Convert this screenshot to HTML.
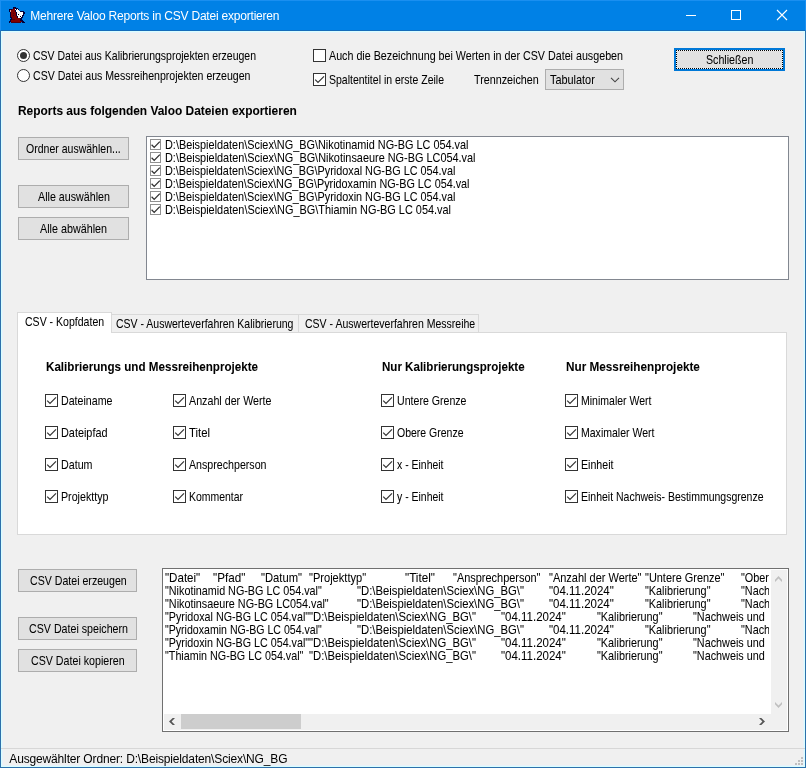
<!DOCTYPE html>
<html lang="de">
<head>
<meta charset="utf-8">
<title>Mehrere Valoo Reports in CSV Datei exportieren</title>
<style>
html,body{margin:0;padding:0;}
body{width:806px;height:768px;overflow:hidden;position:relative;background:#f0f0f0;font-family:"Liberation Sans",sans-serif;}
.a{position:absolute;box-sizing:border-box;}
.t{position:absolute;white-space:pre;transform-origin:0 0;-webkit-text-stroke:0.05px currentColor;}
.u{-webkit-text-stroke:0;}
.btn{position:absolute;box-sizing:border-box;background:#e1e1e1;border:1px solid #adadad;}
.cb{position:absolute;box-sizing:border-box;width:13px;height:13px;background:#fff;border:1px solid #333;}
.cb svg,.lc svg{position:absolute;left:-1px;top:-1px;}
.lc{position:absolute;box-sizing:border-box;width:11px;height:11px;background:#fff;border:1px solid #909090;}
.rd{position:absolute;box-sizing:border-box;width:13px;height:13px;background:#fff;border:1px solid #333;border-radius:50%;}
</style>
</head>
<body>
<!-- forces grayscale text AA in chromium -->
<div class="a" style="left:0;top:0;width:1px;height:1px;mix-blend-mode:multiply;background:#fff;"></div>
<!-- title bar -->
<div class="a" style="left:0;top:0;width:806px;height:31px;background:#0081e6;border-top:1px solid #1a8ff0;border-left:1px solid #1a8ff0;border-right:1px solid #1a8ff0;border-bottom:1px solid #156cba;"></div>
<!-- window borders + edge halo -->
<div class="a" style="left:1px;top:31px;width:804px;height:736px;border:1px solid #d9feff;"></div>
<div class="a" style="left:2px;top:32px;width:802px;height:734px;border:1px solid #e7f2fb;"></div>
<div class="a" style="left:0;top:31px;width:1px;height:737px;background:#2d70ab;"></div>
<div class="a" style="left:805px;top:31px;width:1px;height:737px;background:#2d70ab;"></div>
<div class="a" style="left:0;top:767px;width:806px;height:1px;background:#2d70ab;"></div>
<!-- app icon -->
<svg class="a" style="left:9px;top:7px;" width="16" height="16" viewBox="0 0 16 16" shape-rendering="crispEdges">
<rect x="4" y="0" width="3" height="1" fill="#00003c"/><rect x="4" y="1" width="1" height="1" fill="#00003c"/><rect x="5" y="1" width="1" height="1" fill="#800000"/><rect x="6" y="1" width="3" height="1" fill="#00003c"/><rect x="0" y="2" width="3" height="1" fill="#00003c"/><rect x="3" y="2" width="3" height="1" fill="#800000"/><rect x="6" y="2" width="1" height="1" fill="#ffffff"/><rect x="7" y="2" width="1" height="1" fill="#00003c"/><rect x="8" y="2" width="1" height="1" fill="#ffffff"/><rect x="9" y="2" width="1" height="1" fill="#00003c"/><rect x="0" y="3" width="1" height="1" fill="#00003c"/><rect x="1" y="3" width="1" height="1" fill="#d8a8a8"/><rect x="2" y="3" width="4" height="1" fill="#800000"/><rect x="6" y="3" width="1" height="1" fill="#00003c"/><rect x="7" y="3" width="3" height="1" fill="#ffffff"/><rect x="0" y="4" width="1" height="1" fill="#00003c"/><rect x="1" y="4" width="1" height="1" fill="#d8a8a8"/><rect x="2" y="4" width="4" height="1" fill="#800000"/><rect x="6" y="4" width="1" height="1" fill="#00003c"/><rect x="7" y="4" width="4" height="1" fill="#ffffff"/><rect x="11" y="4" width="4" height="1" fill="#00003c"/><rect x="1" y="5" width="1" height="1" fill="#00003c"/><rect x="2" y="5" width="5" height="1" fill="#800000"/><rect x="7" y="5" width="1" height="1" fill="#00003c"/><rect x="8" y="5" width="6" height="1" fill="#ffffff"/><rect x="14" y="5" width="2" height="1" fill="#00003c"/><rect x="1" y="6" width="1" height="1" fill="#00003c"/><rect x="2" y="6" width="2" height="1" fill="#800000"/><rect x="4" y="6" width="1" height="1" fill="#500010"/><rect x="5" y="6" width="2" height="1" fill="#800000"/><rect x="7" y="6" width="1" height="1" fill="#00003c"/><rect x="8" y="6" width="6" height="1" fill="#ffffff"/><rect x="14" y="6" width="2" height="1" fill="#00003c"/><rect x="1" y="7" width="1" height="1" fill="#00003c"/><rect x="2" y="7" width="5" height="1" fill="#800000"/><rect x="7" y="7" width="1" height="1" fill="#00003c"/><rect x="8" y="7" width="1" height="1" fill="#ffffff"/><rect x="9" y="7" width="1" height="1" fill="#000000"/><rect x="10" y="7" width="4" height="1" fill="#ffffff"/><rect x="14" y="7" width="1" height="1" fill="#00003c"/><rect x="1" y="8" width="1" height="1" fill="#00003c"/><rect x="2" y="8" width="2" height="1" fill="#800000"/><rect x="4" y="8" width="1" height="1" fill="#500010"/><rect x="5" y="8" width="2" height="1" fill="#800000"/><rect x="7" y="8" width="1" height="1" fill="#00003c"/><rect x="8" y="8" width="5" height="1" fill="#ffffff"/><rect x="13" y="8" width="2" height="1" fill="#00003c"/><rect x="1" y="9" width="1" height="1" fill="#00003c"/><rect x="2" y="9" width="6" height="1" fill="#800000"/><rect x="8" y="9" width="1" height="1" fill="#00003c"/><rect x="9" y="9" width="2" height="1" fill="#ffffff"/><rect x="11" y="9" width="1" height="1" fill="#000000"/><rect x="12" y="9" width="1" height="1" fill="#ffffff"/><rect x="13" y="9" width="1" height="1" fill="#00003c"/><rect x="1" y="10" width="2" height="1" fill="#00003c"/><rect x="3" y="10" width="5" height="1" fill="#800000"/><rect x="8" y="10" width="1" height="1" fill="#00003c"/><rect x="9" y="10" width="3" height="1" fill="#ffffff"/><rect x="12" y="10" width="2" height="1" fill="#00003c"/><rect x="2" y="11" width="1" height="1" fill="#00003c"/><rect x="3" y="11" width="8" height="1" fill="#800000"/><rect x="11" y="11" width="2" height="1" fill="#00003c"/><rect x="1" y="12" width="2" height="1" fill="#00003c"/><rect x="3" y="12" width="3" height="1" fill="#500010"/><rect x="6" y="12" width="5" height="1" fill="#800000"/><rect x="11" y="12" width="2" height="1" fill="#00003c"/><rect x="1" y="13" width="1" height="1" fill="#00003c"/><rect x="2" y="13" width="9" height="1" fill="#800000"/><rect x="11" y="13" width="3" height="1" fill="#00003c"/><rect x="0" y="14" width="2" height="1" fill="#00003c"/><rect x="2" y="14" width="10" height="1" fill="#800000"/><rect x="12" y="14" width="1" height="1" fill="#500010"/><rect x="13" y="14" width="2" height="1" fill="#00003c"/><rect x="0" y="15" width="1" height="1" fill="#00003c"/><rect x="2" y="15" width="10" height="1" fill="#500010"/><rect x="13" y="15" width="3" height="1" fill="#00003c"/>
</svg>
<!-- window controls -->
<svg class="a" style="left:680px;top:0;" width="126" height="31" viewBox="0 0 126 31">
<path d="M6 15.5H16" stroke="#fff" stroke-width="1" fill="none"/>
<rect x="51.5" y="10.5" width="9" height="9" stroke="#fff" stroke-width="1" fill="none"/>
<path d="M97 10L107 20M107 10L97 20" stroke="#fff" stroke-width="1.1" fill="none"/>
</svg>

<!-- radios -->
<div class="rd" style="left:17px;top:49px;"><div class="a" style="left:2px;top:2px;width:7px;height:7px;border-radius:50%;background:#333;"></div></div>
<div class="rd" style="left:17px;top:69px;"></div>
<!-- top checkboxes -->
<div class="cb" style="left:313px;top:49px;"></div>
<div class="cb" style="left:313px;top:73px;"><svg width="13" height="13"><path d="M2.2 6.6L5 9.4L11 3.4" stroke="#333" stroke-width="1.2" fill="none"/></svg></div>
<!-- dropdown -->
<div class="a" style="left:545px;top:69px;width:79px;height:21px;background:#e1e1e1;border:1px solid #adadad;">
<svg class="a" style="left:64px;top:7px;" width="10" height="6"><path d="M1 0.8L5 4.8L9 0.8" stroke="#444" stroke-width="1.1" fill="none"/></svg>
</div>
<!-- close button (focused) -->
<div class="btn" style="left:674px;top:48px;width:111px;height:23px;border:2px solid #0078d7;">
<div class="a" style="left:0;top:0;right:0;bottom:0;border:1px solid #f4f4f4;"></div>
<div class="a" style="left:0;top:0;right:0;bottom:0;border:1px dotted #000;"></div>
</div>

<!-- left buttons -->
<div class="btn" style="left:18px;top:137px;width:111px;height:23px;"></div>
<div class="btn" style="left:18px;top:185px;width:111px;height:23px;"></div>
<div class="btn" style="left:18px;top:217px;width:111px;height:23px;"></div>

<!-- list box -->
<div class="a" style="left:146px;top:136px;width:643px;height:144px;background:#fff;border:1px solid #828790;"></div>
<div class="lc" style="left:150px;top:139px;"><svg width="11" height="11"><path d="M1.6 5.8L4.2 8.4L9.8 2.6" stroke="#303030" stroke-width="1.3" fill="none"/></svg></div>
<div class="lc" style="left:150px;top:152px;"><svg width="11" height="11"><path d="M1.6 5.8L4.2 8.4L9.8 2.6" stroke="#303030" stroke-width="1.3" fill="none"/></svg></div>
<div class="lc" style="left:150px;top:165px;"><svg width="11" height="11"><path d="M1.6 5.8L4.2 8.4L9.8 2.6" stroke="#303030" stroke-width="1.3" fill="none"/></svg></div>
<div class="lc" style="left:150px;top:178px;"><svg width="11" height="11"><path d="M1.6 5.8L4.2 8.4L9.8 2.6" stroke="#303030" stroke-width="1.3" fill="none"/></svg></div>
<div class="lc" style="left:150px;top:191px;"><svg width="11" height="11"><path d="M1.6 5.8L4.2 8.4L9.8 2.6" stroke="#303030" stroke-width="1.3" fill="none"/></svg></div>
<div class="lc" style="left:150px;top:204px;"><svg width="11" height="11"><path d="M1.6 5.8L4.2 8.4L9.8 2.6" stroke="#303030" stroke-width="1.3" fill="none"/></svg></div>


<!-- tab control -->
<div class="a" style="left:17px;top:332px;width:770px;height:203px;background:#fff;border:1px solid #d9d9d9;"></div>
<div class="a" style="left:111px;top:314px;width:188px;height:19px;background:#f0f0f0;border:1px solid #d9d9d9;border-left:none;"></div>
<div class="a" style="left:298px;top:314px;width:181px;height:19px;background:#f0f0f0;border:1px solid #d9d9d9;"></div>
<div class="a" style="left:17px;top:312px;width:95px;height:21px;background:#fff;border:1px solid #d9d9d9;border-bottom:none;"></div>
<div class="cb" style="left:45px;top:394px;"><svg width="13" height="13"><path d="M2.2 6.6L5 9.4L11 3.4" stroke="#333" stroke-width="1.2" fill="none"/></svg></div>
<div class="cb" style="left:45px;top:426px;"><svg width="13" height="13"><path d="M2.2 6.6L5 9.4L11 3.4" stroke="#333" stroke-width="1.2" fill="none"/></svg></div>
<div class="cb" style="left:45px;top:458px;"><svg width="13" height="13"><path d="M2.2 6.6L5 9.4L11 3.4" stroke="#333" stroke-width="1.2" fill="none"/></svg></div>
<div class="cb" style="left:45px;top:490px;"><svg width="13" height="13"><path d="M2.2 6.6L5 9.4L11 3.4" stroke="#333" stroke-width="1.2" fill="none"/></svg></div>
<div class="cb" style="left:173px;top:394px;"><svg width="13" height="13"><path d="M2.2 6.6L5 9.4L11 3.4" stroke="#333" stroke-width="1.2" fill="none"/></svg></div>
<div class="cb" style="left:173px;top:426px;"><svg width="13" height="13"><path d="M2.2 6.6L5 9.4L11 3.4" stroke="#333" stroke-width="1.2" fill="none"/></svg></div>
<div class="cb" style="left:173px;top:458px;"><svg width="13" height="13"><path d="M2.2 6.6L5 9.4L11 3.4" stroke="#333" stroke-width="1.2" fill="none"/></svg></div>
<div class="cb" style="left:173px;top:490px;"><svg width="13" height="13"><path d="M2.2 6.6L5 9.4L11 3.4" stroke="#333" stroke-width="1.2" fill="none"/></svg></div>
<div class="cb" style="left:381px;top:394px;"><svg width="13" height="13"><path d="M2.2 6.6L5 9.4L11 3.4" stroke="#333" stroke-width="1.2" fill="none"/></svg></div>
<div class="cb" style="left:381px;top:426px;"><svg width="13" height="13"><path d="M2.2 6.6L5 9.4L11 3.4" stroke="#333" stroke-width="1.2" fill="none"/></svg></div>
<div class="cb" style="left:381px;top:458px;"><svg width="13" height="13"><path d="M2.2 6.6L5 9.4L11 3.4" stroke="#333" stroke-width="1.2" fill="none"/></svg></div>
<div class="cb" style="left:381px;top:490px;"><svg width="13" height="13"><path d="M2.2 6.6L5 9.4L11 3.4" stroke="#333" stroke-width="1.2" fill="none"/></svg></div>
<div class="cb" style="left:565px;top:394px;"><svg width="13" height="13"><path d="M2.2 6.6L5 9.4L11 3.4" stroke="#333" stroke-width="1.2" fill="none"/></svg></div>
<div class="cb" style="left:565px;top:426px;"><svg width="13" height="13"><path d="M2.2 6.6L5 9.4L11 3.4" stroke="#333" stroke-width="1.2" fill="none"/></svg></div>
<div class="cb" style="left:565px;top:458px;"><svg width="13" height="13"><path d="M2.2 6.6L5 9.4L11 3.4" stroke="#333" stroke-width="1.2" fill="none"/></svg></div>
<div class="cb" style="left:565px;top:490px;"><svg width="13" height="13"><path d="M2.2 6.6L5 9.4L11 3.4" stroke="#333" stroke-width="1.2" fill="none"/></svg></div>


<!-- bottom buttons -->
<div class="btn" style="left:18px;top:569px;width:119px;height:23px;"></div>
<div class="btn" style="left:18px;top:617px;width:119px;height:23px;"></div>
<div class="btn" style="left:18px;top:649px;width:119px;height:23px;"></div>

<!-- text box -->
<div class="a" style="left:162px;top:568px;width:627px;height:164px;background:#fff;border:1px solid #707070;"></div>
<div class="a" style="left:0;top:0;width:769px;height:714px;overflow:hidden;">
<div class=t style="left:165.30px;top:570px;font-size:13px;line-height:15px;height:15px;color:#000;transform:scaleX(0.8894);">&quot;Datei&quot;</div>
<div class=t style="left:213.30px;top:570px;font-size:13px;line-height:15px;height:15px;color:#000;transform:scaleX(0.8976);">&quot;Pfad&quot;</div>
<div class=t style="left:261.30px;top:570px;font-size:13px;line-height:15px;height:15px;color:#000;transform:scaleX(0.8626);">&quot;Datum&quot;</div>
<div class=t style="left:309.30px;top:570px;font-size:13px;line-height:15px;height:15px;color:#000;transform:scaleX(0.8518);">&quot;Projekttyp&quot;</div>
<div class=t style="left:405.30px;top:570px;font-size:13px;line-height:15px;height:15px;color:#000;transform:scaleX(0.9006);">&quot;Titel&quot;</div>
<div class=t style="left:453.30px;top:570px;font-size:13px;line-height:15px;height:15px;color:#000;transform:scaleX(0.8421);">&quot;Ansprechperson&quot;</div>
<div class=t style="left:549.30px;top:570px;font-size:13px;line-height:15px;height:15px;color:#000;transform:scaleX(0.8452);">&quot;Anzahl der Werte&quot;</div>
<div class=t style="left:645.30px;top:570px;font-size:13px;line-height:15px;height:15px;color:#000;transform:scaleX(0.8413);">&quot;Untere Grenze&quot;</div>
<div class=t style="left:741.30px;top:570px;font-size:13px;line-height:15px;height:15px;color:#000;transform:scaleX(0.8351);">&quot;Obere Grenze&quot;</div>
<div class=t style="left:165.30px;top:583px;font-size:13px;line-height:15px;height:15px;color:#000;transform:scaleX(0.8290);">&quot;Nikotinamid NG-BG LC 054.val&quot;</div>
<div class=t style="left:357.30px;top:583px;font-size:13px;line-height:15px;height:15px;color:#000;transform:scaleX(0.8696);">&quot;D:\Beispieldaten\Sciex\NG_BG\&quot;</div>
<div class=t style="left:549.30px;top:583px;font-size:13px;line-height:15px;height:15px;color:#000;transform:scaleX(0.8837);">&quot;04.11.2024&quot;</div>
<div class=t style="left:645.30px;top:583px;font-size:13px;line-height:15px;height:15px;color:#000;transform:scaleX(0.8332);">&quot;Kalibrierung&quot;</div>
<div class=t style="left:741.30px;top:583px;font-size:13px;line-height:15px;height:15px;color:#000;transform:scaleX(0.8322);">&quot;Nachweis und</div>
<div class=t style="left:165.30px;top:596px;font-size:13px;line-height:15px;height:15px;color:#000;transform:scaleX(0.8306);">&quot;Nikotinsaeure NG-BG LC054.val&quot;</div>
<div class=t style="left:357.30px;top:596px;font-size:13px;line-height:15px;height:15px;color:#000;transform:scaleX(0.8696);">&quot;D:\Beispieldaten\Sciex\NG_BG\&quot;</div>
<div class=t style="left:549.30px;top:596px;font-size:13px;line-height:15px;height:15px;color:#000;transform:scaleX(0.8837);">&quot;04.11.2024&quot;</div>
<div class=t style="left:645.30px;top:596px;font-size:13px;line-height:15px;height:15px;color:#000;transform:scaleX(0.8332);">&quot;Kalibrierung&quot;</div>
<div class=t style="left:741.30px;top:596px;font-size:13px;line-height:15px;height:15px;color:#000;transform:scaleX(0.8322);">&quot;Nachweis und</div>
<div class=t style="left:165.30px;top:609px;font-size:13px;line-height:15px;height:15px;color:#000;transform:scaleX(0.8249);">&quot;Pyridoxal NG-BG LC 054.val&quot;</div>
<div class=t style="left:309.30px;top:609px;font-size:13px;line-height:15px;height:15px;color:#000;transform:scaleX(0.8696);">&quot;D:\Beispieldaten\Sciex\NG_BG\&quot;</div>
<div class=t style="left:501.30px;top:609px;font-size:13px;line-height:15px;height:15px;color:#000;transform:scaleX(0.8837);">&quot;04.11.2024&quot;</div>
<div class=t style="left:597.30px;top:609px;font-size:13px;line-height:15px;height:15px;color:#000;transform:scaleX(0.8332);">&quot;Kalibrierung&quot;</div>
<div class=t style="left:693.30px;top:609px;font-size:13px;line-height:15px;height:15px;color:#000;transform:scaleX(0.8322);">&quot;Nachweis und</div>
<div class=t style="left:165.30px;top:622px;font-size:13px;line-height:15px;height:15px;color:#000;transform:scaleX(0.8135);">&quot;Pyridoxamin NG-BG LC 054.val&quot;</div>
<div class=t style="left:357.30px;top:622px;font-size:13px;line-height:15px;height:15px;color:#000;transform:scaleX(0.8696);">&quot;D:\Beispieldaten\Sciex\NG_BG\&quot;</div>
<div class=t style="left:549.30px;top:622px;font-size:13px;line-height:15px;height:15px;color:#000;transform:scaleX(0.8837);">&quot;04.11.2024&quot;</div>
<div class=t style="left:645.30px;top:622px;font-size:13px;line-height:15px;height:15px;color:#000;transform:scaleX(0.8332);">&quot;Kalibrierung&quot;</div>
<div class=t style="left:741.30px;top:622px;font-size:13px;line-height:15px;height:15px;color:#000;transform:scaleX(0.8322);">&quot;Nachweis und</div>
<div class=t style="left:165.30px;top:635px;font-size:13px;line-height:15px;height:15px;color:#000;transform:scaleX(0.8249);">&quot;Pyridoxin NG-BG LC 054.val&quot;</div>
<div class=t style="left:309.30px;top:635px;font-size:13px;line-height:15px;height:15px;color:#000;transform:scaleX(0.8696);">&quot;D:\Beispieldaten\Sciex\NG_BG\&quot;</div>
<div class=t style="left:501.30px;top:635px;font-size:13px;line-height:15px;height:15px;color:#000;transform:scaleX(0.8837);">&quot;04.11.2024&quot;</div>
<div class=t style="left:597.30px;top:635px;font-size:13px;line-height:15px;height:15px;color:#000;transform:scaleX(0.8332);">&quot;Kalibrierung&quot;</div>
<div class=t style="left:693.30px;top:635px;font-size:13px;line-height:15px;height:15px;color:#000;transform:scaleX(0.8322);">&quot;Nachweis und</div>
<div class=t style="left:165.30px;top:648px;font-size:13px;line-height:15px;height:15px;color:#000;transform:scaleX(0.8265);">&quot;Thiamin NG-BG LC 054.val&quot;</div>
<div class=t style="left:309.30px;top:648px;font-size:13px;line-height:15px;height:15px;color:#000;transform:scaleX(0.8696);">&quot;D:\Beispieldaten\Sciex\NG_BG\&quot;</div>
<div class=t style="left:501.30px;top:648px;font-size:13px;line-height:15px;height:15px;color:#000;transform:scaleX(0.8837);">&quot;04.11.2024&quot;</div>
<div class=t style="left:597.30px;top:648px;font-size:13px;line-height:15px;height:15px;color:#000;transform:scaleX(0.8332);">&quot;Kalibrierung&quot;</div>
<div class=t style="left:693.30px;top:648px;font-size:13px;line-height:15px;height:15px;color:#000;transform:scaleX(0.8322);">&quot;Nachweis und</div>
</div>
<!-- scrollbars -->
<div class="a" style="left:771px;top:570px;width:16px;height:160px;background:#f0f0f0;"></div>
<div class="a" style="left:164px;top:714px;width:607px;height:16px;background:#f0f0f0;"></div>
<div class="a" style="left:181px;top:714px;width:120px;height:15px;background:#cdcdcd;"></div>
<svg class="a" style="left:0;top:0;" width="806" height="768" viewBox="0 0 806 768">
<polygon points="775,582 775,579.7 778.5,576 782,579.7 782,582 778.5,578.4" fill="#bfbfbf"/>
<polygon points="775,702 775,704.3 778.5,708 782,704.3 782,702 778.5,705.6" fill="#bfbfbf"/>
<polygon points="175,718 172.7,718 169,721.5 172.7,725 175,725 171.6,721.5" fill="#555"/>
<polygon points="759,718 761.3,718 765,721.5 761.3,725 759,725 762.4,721.5" fill="#555"/>
</svg>

<!-- status bar -->
<div class="a" style="left:1px;top:748px;width:804px;height:1px;background:#d7d7d7;"></div>
<svg class="a" style="left:794px;top:756px;" width="10" height="10" shape-rendering="crispEdges">
<g fill="#bfbfbf"><rect x="7" y="1" width="2" height="2"/><rect x="4" y="4" width="2" height="2"/><rect x="7" y="4" width="2" height="2"/><rect x="1" y="7" width="2" height="2"/><rect x="4" y="7" width="2" height="2"/><rect x="7" y="7" width="2" height="2"/></g>
</svg>

<div class="t u" style="left:30.30px;top:9px;font-size:12px;line-height:15px;height:15px;color:#fff;letter-spacing:-0.208px;">Mehrere Valoo Reports in CSV Datei exportieren</div>
<div class="t" style="left:33.30px;top:48px;font-size:13px;line-height:15px;height:15px;color:#000;transform:scaleX(0.8078);">CSV Datei aus Kalibrierungsprojekten erzeugen</div>
<div class="t" style="left:33.30px;top:68px;font-size:13px;line-height:15px;height:15px;color:#000;transform:scaleX(0.8135);">CSV Datei aus Messreihenprojekten erzeugen</div>
<div class="t" style="left:328.80px;top:48px;font-size:13px;line-height:15px;height:15px;color:#000;transform:scaleX(0.8241);">Auch die Bezeichnung bei Werten in der CSV Datei ausgeben</div>
<div class="t" style="left:329.30px;top:72px;font-size:13px;line-height:15px;height:15px;color:#000;transform:scaleX(0.8078);">Spaltentitel in erste Zeile</div>
<div class="t" style="left:473.80px;top:72px;font-size:13px;line-height:15px;height:15px;color:#000;transform:scaleX(0.8276);">Trennzeichen</div>
<div class="t" style="left:549.80px;top:72px;font-size:13px;line-height:15px;height:15px;color:#000;transform:scaleX(0.8376);">Tabulator</div>
<div class="t" style="left:706.30px;top:52px;font-size:13px;line-height:15px;height:15px;color:#000;transform:scaleX(0.8199);">Schließen</div>
<div class="t" style="left:17.80px;top:103px;font-size:13px;line-height:15px;height:15px;color:#000;font-weight:bold;transform:scaleX(0.9167);">Reports aus folgenden Valoo Dateien exportieren</div>
<div class="t" style="left:26.30px;top:141px;font-size:13px;line-height:15px;height:15px;color:#000;transform:scaleX(0.8097);">Ordner auswählen...</div>
<div class="t" style="left:37.80px;top:189px;font-size:13px;line-height:15px;height:15px;color:#000;transform:scaleX(0.8222);">Alle auswählen</div>
<div class="t" style="left:39.50px;top:221px;font-size:13px;line-height:15px;height:15px;color:#000;transform:scaleX(0.8276);">Alle abwählen</div>
<div class="t" style="left:165.30px;top:137px;font-size:13px;line-height:15px;height:15px;color:#000;transform:scaleX(0.8367);">D:\Beispieldaten\Sciex\NG_BG\Nikotinamid NG-BG LC 054.val</div>
<div class="t" style="left:165.30px;top:150px;font-size:13px;line-height:15px;height:15px;color:#000;transform:scaleX(0.8377);">D:\Beispieldaten\Sciex\NG_BG\Nikotinsaeure NG-BG LC054.val</div>
<div class="t" style="left:165.30px;top:163px;font-size:13px;line-height:15px;height:15px;color:#000;transform:scaleX(0.8341);">D:\Beispieldaten\Sciex\NG_BG\Pyridoxal NG-BG LC 054.val</div>
<div class="t" style="left:165.30px;top:176px;font-size:13px;line-height:15px;height:15px;color:#000;transform:scaleX(0.8312);">D:\Beispieldaten\Sciex\NG_BG\Pyridoxamin NG-BG LC 054.val</div>
<div class="t" style="left:165.30px;top:189px;font-size:13px;line-height:15px;height:15px;color:#000;transform:scaleX(0.8341);">D:\Beispieldaten\Sciex\NG_BG\Pyridoxin NG-BG LC 054.val</div>
<div class="t" style="left:165.30px;top:202px;font-size:13px;line-height:15px;height:15px;color:#000;transform:scaleX(0.8386);">D:\Beispieldaten\Sciex\NG_BG\Thiamin NG-BG LC 054.val</div>
<div class="t" style="left:25.40px;top:314px;font-size:13px;line-height:15px;height:15px;color:#000;transform:scaleX(0.8108);">CSV - Kopfdaten</div>
<div class="t" style="left:116.40px;top:316px;font-size:13px;line-height:15px;height:15px;color:#000;transform:scaleX(0.8076);">CSV - Auswerteverfahren Kalibrierung</div>
<div class="t" style="left:305.30px;top:316px;font-size:13px;line-height:15px;height:15px;color:#000;transform:scaleX(0.8095);">CSV - Auswerteverfahren Messreihe</div>
<div class="t" style="left:45.50px;top:359px;font-size:13px;line-height:15px;height:15px;color:#000;font-weight:bold;transform:scaleX(0.8951);">Kalibrierungs und Messreihenprojekte</div>
<div class="t" style="left:381.70px;top:359px;font-size:13px;line-height:15px;height:15px;color:#000;font-weight:bold;transform:scaleX(0.8892);">Nur Kalibrierungsprojekte</div>
<div class="t" style="left:565.60px;top:359px;font-size:13px;line-height:15px;height:15px;color:#000;font-weight:bold;transform:scaleX(0.9041);">Nur Messreihenprojekte</div>
<div class="t" style="left:61.30px;top:393px;font-size:13px;line-height:15px;height:15px;color:#000;transform:scaleX(0.8191);">Dateiname</div>
<div class="t" style="left:61.30px;top:425px;font-size:13px;line-height:15px;height:15px;color:#000;transform:scaleX(0.8355);">Dateipfad</div>
<div class="t" style="left:61.30px;top:457px;font-size:13px;line-height:15px;height:15px;color:#000;transform:scaleX(0.8225);">Datum</div>
<div class="t" style="left:61.30px;top:489px;font-size:13px;line-height:15px;height:15px;color:#000;transform:scaleX(0.8216);">Projekttyp</div>
<div class="t" style="left:189.30px;top:393px;font-size:13px;line-height:15px;height:15px;color:#000;transform:scaleX(0.8233);">Anzahl der Werte</div>
<div class="t" style="left:189.30px;top:425px;font-size:13px;line-height:15px;height:15px;color:#000;transform:scaleX(0.8722);">Titel</div>
<div class="t" style="left:189.30px;top:457px;font-size:13px;line-height:15px;height:15px;color:#000;transform:scaleX(0.8186);">Ansprechperson</div>
<div class="t" style="left:189.30px;top:489px;font-size:13px;line-height:15px;height:15px;color:#000;transform:scaleX(0.8035);">Kommentar</div>
<div class="t" style="left:397.30px;top:393px;font-size:13px;line-height:15px;height:15px;color:#000;transform:scaleX(0.8151);">Untere Grenze</div>
<div class="t" style="left:397.30px;top:425px;font-size:13px;line-height:15px;height:15px;color:#000;transform:scaleX(0.8073);">Obere Grenze</div>
<div class="t" style="left:397.30px;top:457px;font-size:13px;line-height:15px;height:15px;color:#000;transform:scaleX(0.8043);">x - Einheit</div>
<div class="t" style="left:397.30px;top:489px;font-size:13px;line-height:15px;height:15px;color:#000;transform:scaleX(0.8043);">y - Einheit</div>
<div class="t" style="left:581.30px;top:393px;font-size:13px;line-height:15px;height:15px;color:#000;transform:scaleX(0.8087);">Minimaler Wert</div>
<div class="t" style="left:581.30px;top:425px;font-size:13px;line-height:15px;height:15px;color:#000;transform:scaleX(0.8096);">Maximaler Wert</div>
<div class="t" style="left:581.30px;top:457px;font-size:13px;line-height:15px;height:15px;color:#000;transform:scaleX(0.8176);">Einheit</div>
<div class="t" style="left:581.30px;top:489px;font-size:13px;line-height:15px;height:15px;color:#000;transform:scaleX(0.8070);">Einheit Nachweis- Bestimmungsgrenze</div>
<div class="t" style="left:30.10px;top:573px;font-size:13px;line-height:15px;height:15px;color:#000;transform:scaleX(0.8159);">CSV Datei erzeugen</div>
<div class="t" style="left:29.10px;top:621px;font-size:13px;line-height:15px;height:15px;color:#000;transform:scaleX(0.8204);">CSV Datei speichern</div>
<div class="t" style="left:31.30px;top:653px;font-size:13px;line-height:15px;height:15px;color:#000;transform:scaleX(0.8198);">CSV Datei kopieren</div>
<div class="t u" style="left:9.30px;top:752px;font-size:12px;line-height:15px;height:15px;color:#000;letter-spacing:-0.152px;">Ausgewählter Ordner: D:\Beispieldaten\Sciex\NG_BG</div>
</body>
</html>
